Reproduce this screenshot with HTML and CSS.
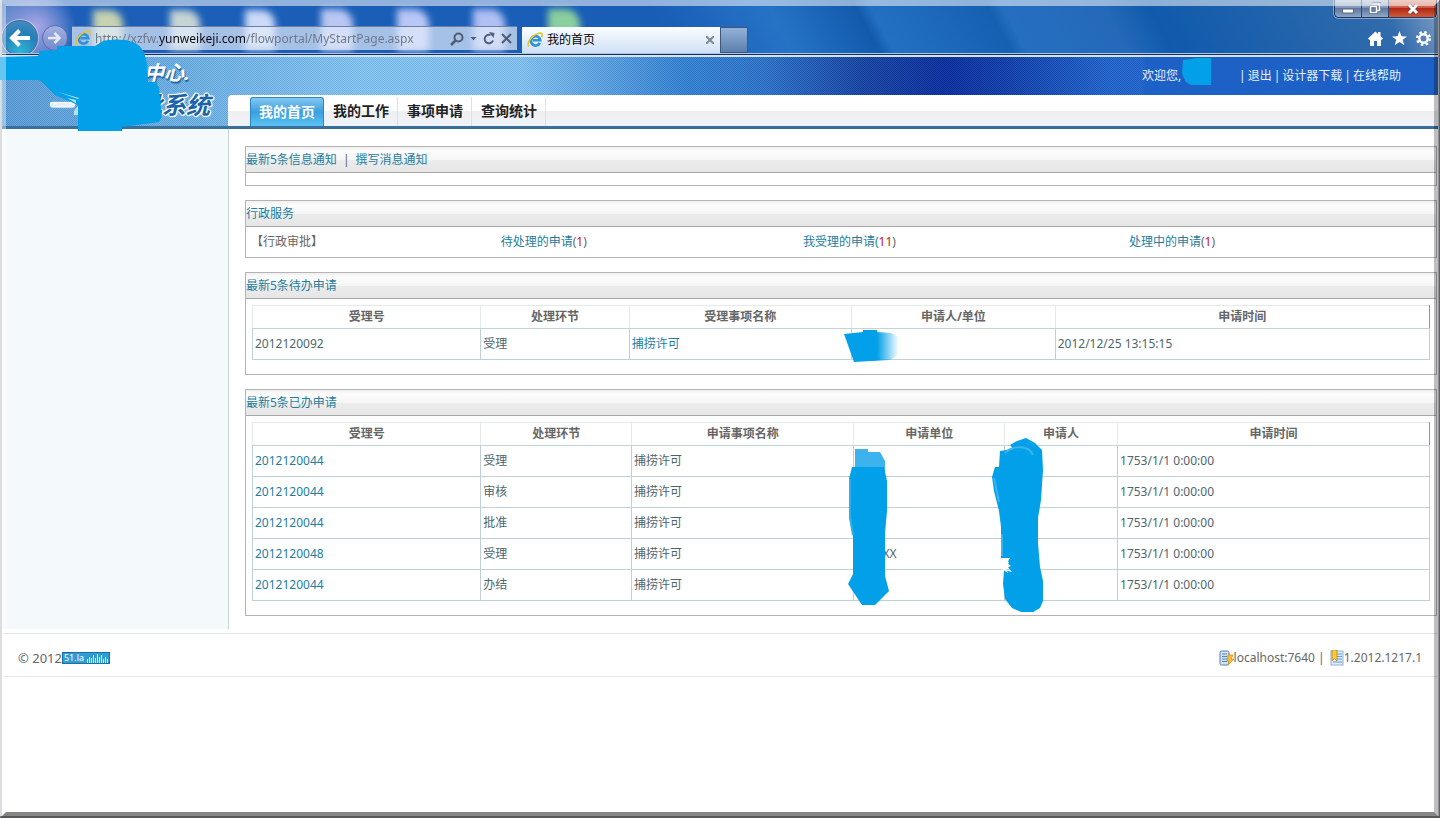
FILE: index.html
```html
<!DOCTYPE html>
<html lang="zh-CN">
<head>
<meta charset="utf-8">
<title>我的首页</title>
<link rel="stylesheet" href="styles.css">
</head>
<body>
<svg class="defs" aria-hidden="true">
  <symbol id="ie" viewBox="0 0 18 18">
    <path d="M13.6 11.5A5 5 0 1 1 14 8.7H6" fill="none" stroke="#2f93d6" stroke-width="2.8"/>
    <path d="M2 15.5C-1 12 5 3.500 12 1.500c4-1 5 1 3.500 4" fill="none" stroke="#e6c335" stroke-width="1.700"/>
  </symbol>
</svg>
<div class="window">
  <header class="chrome">
    <div class="caption">
      <button type="button" aria-label="最小化"><svg width="14" height="12" viewBox="0 0 14 12"><rect x="1.500" y="6" width="11" height="4" fill="#fff" stroke="#56698a"/></svg></button>
      <button type="button" aria-label="还原"><svg width="14" height="13" viewBox="0 0 14 13"><path d="M4.500 1.500h7v7h-2M2.500 4.500h6v6h-6z" fill="none" stroke="#465a7c" stroke-width="3"/><path d="M4.500 2h7v6.500h-2M2.500 4.500h6v6h-6z" fill="none" stroke="#fff" stroke-width="1.700"/></svg></button>
      <button type="button" class="close" aria-label="关闭"><svg width="14" height="12" viewBox="0 0 14 12"><path d="M3 2l8 8M11 2l-8 8" stroke="#6b4242" stroke-width="4.500"/><path d="M3 2l8 8M11 2l-8 8" stroke="#fff" stroke-width="3"/></svg></button>
    </div>
    <div class="toolbar">
      <button type="button" class="back" aria-label="后退"><svg width="22" height="20" viewBox="0 0 22 20"><path d="M21 10H3M10.500 2.500L3 10l7.500 7.500" fill="none" stroke="#fff" stroke-width="4"/></svg></button>
      <button type="button" class="forward" aria-label="前进"><svg width="14" height="14" viewBox="0 0 14 14"><path d="M0 7h11M6.500 2l5 5-5 5" fill="none" stroke="#e4e9fb" stroke-width="2.500"/></svg></button>
      <div class="address">
        <svg width="17" height="17"><use href="#ie"/></svg>
        <input type="text" aria-label="地址" value="http://xzfw.yunweikeji.com/flowportal/MyStartPage.aspx">
        <button type="button" aria-label="搜索"><svg width="14" height="14" viewBox="0 0 14 14"><circle cx="8.500" cy="5.500" r="4" fill="none" stroke="#4f5d78" stroke-width="2"/><path d="M5.500 8.500L1 13" stroke="#4f5d78" stroke-width="2.500"/></svg></button>
        <button type="button" aria-label="更多"><svg width="7" height="4" viewBox="0 0 8 5"><path d="M0 0h8L4 4z" fill="#4f5d78"/></svg></button>
        <button type="button" aria-label="刷新"><svg width="12" height="13" viewBox="0 0 12 13"><path d="M10 8.500A4.300 4.300 0 1 1 7.500 3" fill="none" stroke="#4f5d78" stroke-width="2"/><path d="M6 0l5.500 1-1 5z" fill="#4f5d78"/></svg></button>
        <button type="button" aria-label="停止"><svg width="11" height="11" viewBox="0 0 11 11"><path d="M1 1l9 9M10 1l-9 9" stroke="#4f5d78" stroke-width="2"/></svg></button>
      </div>
      <div class="tab">
        <svg width="17" height="17"><use href="#ie"/></svg>
        <span>我的首页</span>
        <button type="button" aria-label="关闭标签"><svg width="8" height="8" viewBox="0 0 8 8"><path d="M0 0l8 8M8 0L0 8" stroke="#7f8794" stroke-width="2"/></svg></button>
      </div>
      <button type="button" class="newtab" aria-label="新标签"></button>
      <div class="tools">
        <button type="button" aria-label="主页"><svg width="15" height="15" viewBox="0 0 15 15"><path d="M0 7.500L7.500 .5 10 3V1h2.500v4.300L15 7.500l-1.500 1.500-.5-.5V15H9v-5H6v5H2V8.500l-.5.500z" fill="#fff"/></svg></button>
        <button type="button" aria-label="收藏"><svg width="15" height="15" viewBox="0 0 15 15"><path d="M7.500 0l2 5.200 5.500.2-4.300 3.400 1.600 5.500-4.800-3.200-4.800 3.200 1.600-5.500L0 5.400l5.500-.2z" fill="#fff"/></svg></button>
        <button type="button" aria-label="工具"><svg width="15" height="15" viewBox="0 0 15 15"><circle cx="7.500" cy="7.500" r="6.300" fill="none" stroke="#fff" stroke-width="2.400" stroke-dasharray="2.500 2.448"/><circle cx="7.500" cy="7.500" r="4.200" fill="none" stroke="#fff" stroke-width="2.400"/></svg></button>
      </div>
    </div>
  </header>
  <div class="edge"></div>

  <div class="banner">
    <div class="logo">
      <p class="org">中心.</p>
      <p class="sys"><span class="first">一</span><span>审批系统</span></p>
      <svg class="brush" width="164" height="92" viewBox="0 0 164 92" aria-hidden="true">
        <path d="M0 18l38-1 2-5 17-1v-4h38l8-5c16-3 34-2 40 10 4 8 5 18 5 31h8l3 6 3 28-3 6-37 5v4H78V66L55 56 43 44l-4-3H0z" fill="#02a0e8"/>
        <path d="M79 59l-21-6 20 7zM76 61l-9-2 9 5zM74 72l4-5v9h-4z" fill="#b9e1f9"/>
      </svg>
    </div>
    <div class="bannermain">
      <div class="user">
        <span class="welcome">欢迎您,<svg width="29" height="28" viewBox="0 0 29 28" aria-hidden="true"><path d="M1 2l14-2h14v27H9l-5-3-4-8z" fill="#02a0e8"/></svg></span>
        <span>|</span><a href="#">退出</a><span>|</span><a href="#">设计器下载</a><span>|</span><a href="#">在线帮助</a>
      </div>
      <nav class="menu">
        <a href="#" class="on">我的首页</a><a href="#">我的工作</a><a href="#">事项申请</a><a href="#">查询统计</a>
      </nav>
    </div>
  </div>

  <div class="body">
    <aside class="side"></aside>
    <main>
      <section class="panel">
        <h2><a href="#">最新5条信息通知</a><span>|</span><a href="#">撰写消息通知</a></h2>
        <div class="empty"></div>
      </section>
      <section class="panel">
        <h2><a href="#">行政服务</a></h2>
        <div class="service">
          <span class="kind">【行政审批】</span>
          <span><a href="#">待处理的申请</a>(<b>1</b>)</span>
          <span><a href="#">我受理的申请(</a><b>11</b>)</span>
          <span><a href="#">处理中的申请</a>(<b>1</b>)</span>
        </div>
      </section>
      <section class="panel">
        <h2><a href="#">最新5条待办申请</a></h2>
        <table class="todo">
          <thead><tr><th>受理号</th><th>处理环节</th><th>受理事项名称</th><th>申请人/单位</th><th>申请时间</th></tr></thead>
          <tbody><tr><td>2012120092</td><td>受理</td><td><a href="#">捕捞许可</a></td>
            <td class="mark"><svg class="m1" width="56" height="34" viewBox="0 0 56 34" aria-hidden="true"><defs><linearGradient id="f"><stop offset=".6" stop-color="#02a0e8"/><stop offset="1" stop-color="#02a0e8" stop-opacity="0"/></linearGradient></defs><path d="M0 5l19-2V1h14v2l14 1 8 4-1 18-8 5-36 2z" fill="url(#f)"/></svg></td>
            <td>2012/12/25 13:15:15</td></tr></tbody>
        </table>
      </section>
      <section class="panel">
        <h2><a href="#">最新5条已办申请</a></h2>
        <table class="done">
          <thead><tr><th>受理号</th><th>处理环节</th><th>申请事项名称</th><th>申请单位</th><th>申请人</th><th>申请时间</th></tr></thead>
          <tbody>
            <tr><td><a href="#">2012120044</a></td><td>受理</td><td>捕捞许可</td>
              <td class="mark"><svg class="m2" width="42" height="156" viewBox="0 0 42 156" aria-hidden="true"><path d="M7 0h13v3h12l5 9v24H7z" fill="#3cb3ec"/><path d="M4 18h32l3 14v30l-2 22v43l4 15-14 14H14L0 135l5-10V88L1 68V30z" fill="#02a0e8"/><path d="M2 30v38l3 18" fill="none" stroke="#30aeeb" stroke-width="2"/></svg></td>
              <td class="mark"><svg class="m3" width="52" height="174" viewBox="0 0 52 174" aria-hidden="true"><path d="M18 7l7-4 9-3 9 5 7 7 1 20-2 30-3 18v25l2 24 3 14v20l-3 7-12 7-16-7-7-9-2-15 1-14 8 2-5-6 2-4-8-4V89l-2-16-5-20-2-14 3-10h4l1-16 13-2z" fill="#02a0e8"/><path d="M13 15c8-8 24-8 28 2M2 40l5 24M10 96v22" fill="none" stroke="#3cb3ec" stroke-width="2"/><path d="M10 120h8l-3 5 4 3-5 2 2 5-6-4z" fill="#fff"/></svg></td>
              <td>1753/1/1 0:00:00</td></tr>
            <tr><td><a href="#">2012120044</a></td><td>审核</td><td>捕捞许可</td><td></td><td></td><td>1753/1/1 0:00:00</td></tr>
            <tr><td><a href="#">2012120044</a></td><td>批准</td><td>捕捞许可</td><td></td><td></td><td>1753/1/1 0:00:00</td></tr>
            <tr><td><a href="#">2012120048</a></td><td>受理</td><td>捕捞许可</td><td class="unit">XX</td><td></td><td>1753/1/1 0:00:00</td></tr>
            <tr><td><a href="#">2012120044</a></td><td>办结</td><td>捕捞许可</td><td></td><td></td><td>1753/1/1 0:00:00</td></tr>
          </tbody>
        </table>
      </section>
    </main>
  </div>

  <footer>
    <span class="copy">© 2012</span>
    <a href="#" class="stat"><span>51.la</span><svg width="22" height="9" viewBox="0 0 22 9" aria-hidden="true"><path d="M1.500 5v4M3.500 3v6M5.500 4v5M7.500 1v8M9.500 4v5M11.500 0v9M13.500 3v6M15.500 1v8M17.500 5v4M19.500 3v6M21.500 5v4" stroke="#d8f0fc"/></svg></a>
    <span class="host">
      <svg width="15" height="16" viewBox="0 0 15 16" aria-hidden="true"><rect x="1" y="1" width="9" height="14" rx="1.500" fill="#cfe3f5" stroke="#587fa8"/><path d="M3 4h5M3 6.500h5M3 9h5M3 11.500h5" stroke="#5686b8"/><path d="M9 5h5l-2 4h3l-6 6 1-4H8z" fill="#f8bd38" stroke="#c98a1a" stroke-width=".7"/></svg>localhost:7640 |</span>
    <span class="ver">
      <svg width="14" height="16" viewBox="0 0 14 16" aria-hidden="true"><rect x="1" y="1" width="12" height="14" fill="#dcebfa" stroke="#8eb1d8"/><path d="M7 4h5M7 6.500h5M7 9h5M3 12h9" stroke="#6a9bd0"/><path d="M2 0h5v11L4.500 8.500 2 11z" fill="#fbc644" stroke="#b98a20" stroke-width=".8"/></svg>1.2012.1217.1</span>
  </footer>
</div>
<div class="frame"></div>
</body>
</html>
```
FILE: styles.css
```css
* { box-sizing: border-box; }
body {
  margin: 0;
  background: #fff;
  color: #666;
  font: 12px/18px "Noto Sans", "Noto Sans CJK SC", sans-serif;
}
a { color: #1c7d9f; text-decoration: none; }
button { padding: 0; border: 0; background: none; display: grid; place-items: center; }
svg { display: block; flex: none; }
p, h2 { margin: 0; }
.defs { position: absolute; width: 0; height: 0; }
.window {
  min-height: 100vh;
  border: solid #c4c7cb;
  border-width: 0 2px;
}
.frame {
  position: fixed;
  inset: 0;
  z-index: 5;
  pointer-events: none;
  border: 6px solid;
  border-color: rgba(255,255,255,.52) rgba(0,0,0,.26) rgba(0,0,0,.48) rgba(255,255,255,.4);
}
.frame::after {
  content: "";
  position: absolute;
  inset: -6px;
  border: solid rgba(0,0,0,.35);
  border-width: 0 1px 2px 0;
}

/* browser chrome */
.chrome {
  position: relative;
  height: 53px;
  padding-top: 20px;
  overflow: hidden;
  background:
    radial-gradient(ellipse 40px 36px at 34px 26px, #a9a7e6, transparent),
    linear-gradient(65deg, transparent 96%, #7f9fc6 100%),
    linear-gradient(62deg, #6f95cc, #1d5fb8 6%, #185db6 46%, #2673c6 54%, #125aac 60%, #2370c2 61%, #1660b2 69%, #256fc0 70%, #2469b8 77%, #105aac 80%, #2465ac 90%, #3a70ac);
}
/* desktop icons seen through the glass */
.chrome::before {
  content: "";
  position: absolute;
  left: -60px; top: 12px;
  width: 26px; height: 36px;
  border-radius: 0 12px 0 0;
  box-shadow:
    153px 0 7px 2px #c6d2b0,
    230px 0 7px 2px #c6d4d4,
    305px 0 7px 2px #ccdaf8,
    382px 0 7px 3px #b9c7f3,
    458px 0 7px 3px #b9c7f6,
    534px 0 7px 3px #b0c0f3,
    609px 0 7px 3px #8bcf9f;
}
.toolbar { position: relative; display: flex; align-items: center; height: 36px; }
.back {
  width: 36px; height: 36px;
  border-radius: 50%;
  border: 1px solid #456d9c;
  background: radial-gradient(circle at 50% 90%, #2cb6d8, #2480b8 55%, #4f8fc4);
  box-shadow: 0 0 0 1px rgba(255,255,255,.4);
}
.forward {
  width: 26px; height: 26px;
  margin: 0 4px;
  border-radius: 50%;
  border: 1px solid #5c6fae;
  background: linear-gradient(#a2b1e0, #7389cb);
}
.address {
  flex: 0 1 445px;
  display: flex;
  align-items: center;
  gap: 6px;
  height: 24px;
  padding: 0 5px 0 3px;
  background: rgba(225,235,250,.7);
  border-top: 1px solid #6c7f9e;
}
.address input {
  flex: 1;
  min-width: 0;
  margin-left: -3px;
  padding: 0;
  border: 0;
  outline: 0;
  font: inherit;
  color: transparent;
  background: linear-gradient(90deg, #6c7688 64px, #0a0a14 64px, #0a0a14 151px, #6c7688 151px);
  background-clip: text;
}
.tab {
  flex: 0 1 198px;
  align-self: flex-start;
  display: flex;
  align-items: center;
  gap: 3px;
  height: 26px;
  margin: 7px 0 0 5px;
  padding: 0 6px 0 5px;
  color: #000;
  background: linear-gradient(#fbfdff, #cfe0f5);
}
.tab span { flex: 1; }
.newtab {
  align-self: flex-start;
  width: 28px; height: 26px;
  margin-top: 7px;
  border: 1px solid #3f5878;
  background: linear-gradient(#94b2d8, #5b7fae);
}
.tools { display: flex; gap: 9px; margin: 0 7px 0 auto; }
.caption {
  position: absolute;
  top: 0; right: 1px;
  display: flex;
  height: 18px;
  border: 1px solid #24365a;
  border-top: 0;
  border-radius: 0 0 5px 5px;
  box-shadow: 0 0 0 1px rgba(255,255,255,.4);
  overflow: hidden;
}
.caption button {
  width: 27px;
  background: linear-gradient(#b5c3d8, #8096b8 45%, #5e789f 50%, #8fa8c8);
  border-right: 1px solid #33466a;
}
.caption .close { width: 47px; border: 0; background: linear-gradient(#dc9a8c, #cc5a45 45%, #b02a14 50%, #cf5a3c); }
.edge { height: 4px; background: linear-gradient(#a9c4e6 1px, #1b2d50 1px 2px, #d2e3f6 2px); }

/* site banner */
.banner {
  display: flex;
  height: 72px;
  border-bottom: 3px solid #396f9c;
  background:
    linear-gradient(90deg, transparent 1140px, #1d60c6 1144px),
    repeating-conic-gradient(rgba(20,60,140,.16) 0 25%, rgba(255,255,255,.08) 0 50%) 0 0 / 2px 2px,
    linear-gradient(90deg, #5a9fd8, #6db2e4 180px, #84c8f4 360px, #84c5f2 520px, #3282d2 680px, #2a72c8 760px, #12409f 860px, #06289a 945px, #0c3ca8 1010px, #1d62cc 1110px, #1d60c6);
}
.logo {
  position: relative;
  flex: 0 0 226px;
  padding: 3px 0 0 46px;
  color: #fff;
  font-weight: bold;
  font-style: italic;
}
.org { padding-left: 96px; font-size: 20px; line-height: 26px; text-shadow: 1px 2px 1px #23659f; }
.sys {
  display: flex;
  justify-content: space-between;
  width: 162px;
  margin-top: 6px;
  font-size: 24px;
  line-height: 26px;
  color: #1c64a8;
  text-shadow: 1px 0 #fff, -1px 0 #fff, 0 1px #fff, 0 -1px #fff, 1px 1px #fff, -1px -1px #fff, 0 0 3px #fff;
}
.first { color: #e4f2fd; }
.brush { position: absolute; left: -2px; top: -18px; }
.bannermain { flex: 1; display: flex; flex-direction: column; }
.user {
  display: flex;
  justify-content: flex-end;
  align-items: center;
  gap: 2px;
  height: 38px;
  padding-right: 37px;
  color: #e6f0ff;
}
.user a { color: #e6f0ff; }
.welcome { position: relative; width: 95px; }
.welcome svg { position: absolute; left: 40px; top: -9px; }
.menu {
  flex: 1;
  display: flex;
  padding: 2px 0 0 22px;
  border-radius: 4px 0 0 0;
  background: linear-gradient(#fff 50%, #efefef 52%, #eef3fa);
}
.menu a {
  padding: 0 8px 0 9px;
  border-right: 1px solid #dde0e4;
  color: #222;
  font-size: 14px;
  font-weight: bold;
  line-height: 28px;
}
.menu .on {
  padding: 0 8px;
  border: 1px solid #2a86c8;
  border-bottom: 0;
  border-radius: 3px 3px 0 0;
  color: #fff;
  background: linear-gradient(#85c8f0, #3a9fe0 50%, #5cc4f4);
}

/* page body */
.body { display: flex; }
.side { flex: 0 0 227px; background: #f4f9fb; border-right: 1px solid #c6d4da; }
main { flex: 1; display: grid; gap: 14px; padding: 17px 1px 13px 16px; }
.panel { border: 1px solid #b4b4b4; }
.panel h2 {
  display: flex;
  gap: 6px;
  height: 26px;
  border-bottom: 1px solid #a8a8a8;
  background: linear-gradient(#efefef, #fcfcfc 4px, #f6f6f6 50%, #ececec 52%, #e6e6e6);
  font-size: 12px;
  font-weight: normal;
  line-height: 26px;
}
.empty { height: 12px; }
.service {
  display: grid;
  grid-template-columns: 21.4% 25.4% 27.4% 1fr;
  line-height: 30px;
}
.kind { padding-left: 5px; }
b { font-weight: normal; color: #c81414; }
table {
  width: calc(100% - 12px);
  margin: 6px 6px 14px;
  table-layout: fixed;
  border-collapse: collapse;
  color: #4d666e;
}
th { height: 23px; padding: 0; border: 1px solid #e4e9ea; border-bottom-color: #c2d4d8; color: #666; }
th:last-child { border-right-color: #8a9a9e; }
td { height: 31px; padding: 0 2px; border: 1px solid #bfd0d6; }
.todo th:nth-child(1) { width: 19.4%; }
.todo th:nth-child(2) { width: 12.6%; }
.todo th:nth-child(3) { width: 18.9%; }
.todo th:nth-child(4) { width: 17.3%; }
.done th:nth-child(1) { width: 19.4%; }
.done th:nth-child(2) { width: 12.8%; }
.done th:nth-child(3) { width: 18.9%; }
.done th:nth-child(4) { width: 12.8%; }
.done th:nth-child(5) { width: 9.6%; }
.mark { position: relative; border-left-color: #dfe6e8; }
.mark svg { position: absolute; z-index: 1; }
.m1 { left: -8px; top: 0; }
.m2 { left: -6px; top: 3px; }
.m3 { left: -13px; top: -8px; }
.unit { padding-left: 28px; }

footer {
  display: flex;
  align-items: center;
  height: 44px;
  margin-top: 4px;
  padding: 6px 16px 0;
  border: solid #e3e6e6;
  border-width: 1px 0;
}
.copy { font-size: 13px; }
.stat {
  display: flex;
  align-items: center;
  gap: 2px;
  height: 12px;
  padding: 0 1px;
  border: 1px solid #1b6ea8;
  background: #2f9cd4;
  color: #fff;
  font-size: 9px;
  line-height: 10px;
}
.host, .ver { display: flex; align-items: center; }
.host { margin-left: auto; }
.ver { margin-left: 5px; }
```
